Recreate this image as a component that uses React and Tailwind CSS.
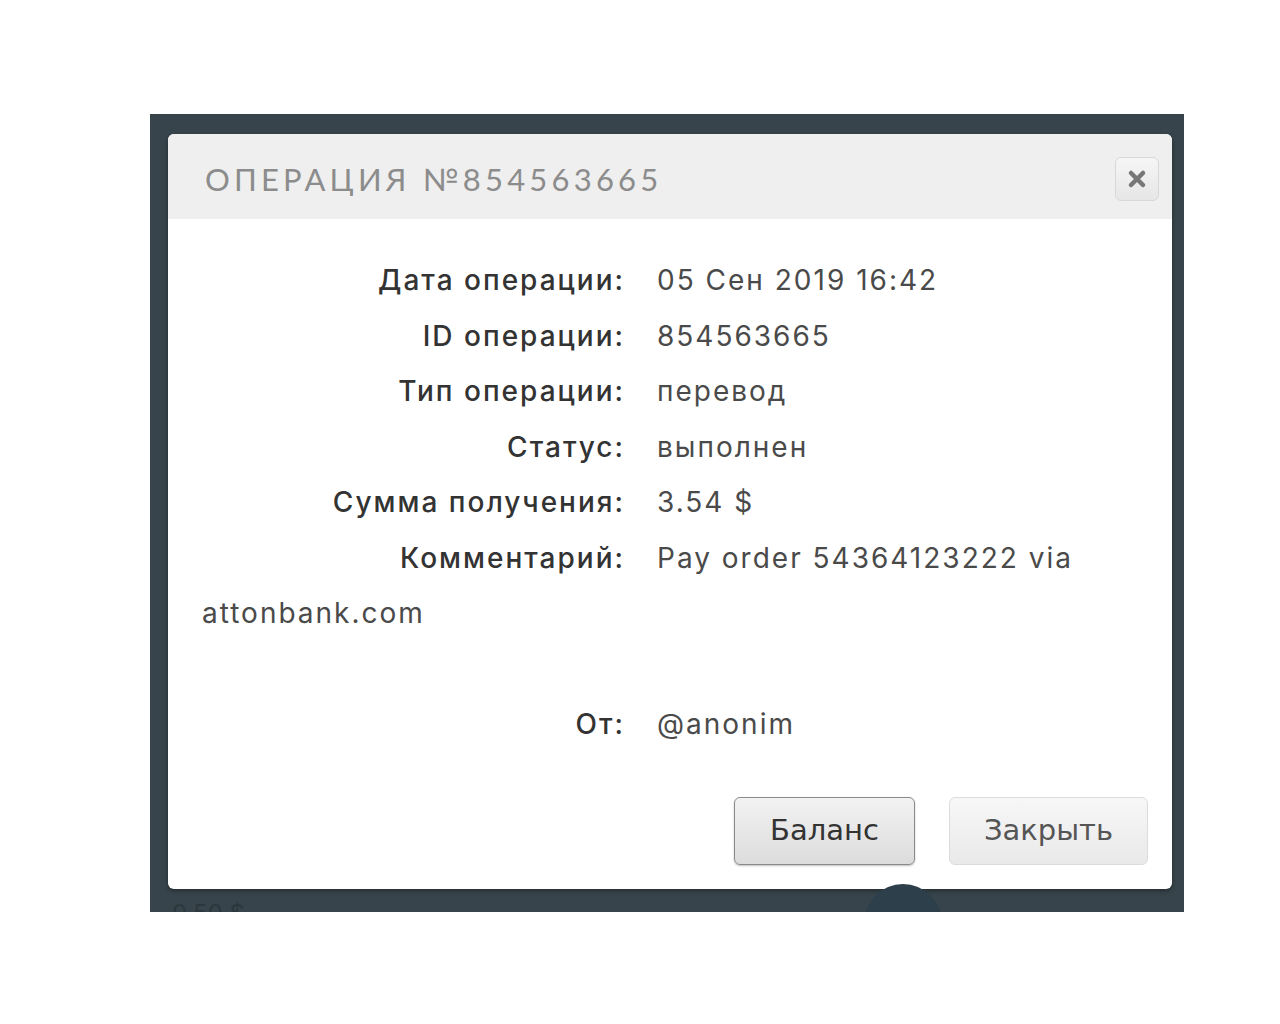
export default function App() {
  const rows = [
    ['Дата операции:', '05 Сен 2019 16:42'],
    ['ID операции:', '854563665'],
    ['Тип операции:', 'перевод'],
    ['Статус:', 'выполнен'],
    ['Сумма получения:', '3.54 $'],
    ['Комментарий:', 'Pay order 54364123222 via'],
  ];

  return (
    <div className="w-[1280px] h-[1024px] bg-white pt-[114px] pl-[150px]">
      <div className="w-[1034px] h-[798px] bg-[#37444b] pt-[20px] pl-[18px] relative overflow-hidden">
        <div className="w-[1004px] h-[755px] bg-white rounded-[6px] shadow-[0_2px_4px_rgba(0,0,0,0.35)] overflow-hidden">
          <div className="h-[85px] bg-[#efefef] flex items-center justify-between pl-[37px] pr-[13px]">
            <h2 className="mt-[5px] text-[31px] tracking-[4.2px] text-[#8c8c8c] font-['Lato',sans-serif] font-normal">
              ОПЕРАЦИЯ №854563665
            </h2>
            <button className="mt-[5px] w-[44px] h-[44px] rounded-[6px] border border-[#d8d8d8] bg-gradient-to-b from-[#f6f6f6] to-[#e6e6e6] flex items-center justify-center">
              <svg width="20" height="20" viewBox="0 0 20 20">
                <path d="M4 4 L16 16 M16 4 L4 16" stroke="#777" strokeWidth="4.5" strokeLinecap="round" />
              </svg>
            </button>
          </div>

          <div className="pl-[34px] pr-[30px] pt-[34px] text-[28px] tracking-[2px] leading-[55.5px] font-['Inter',sans-serif] text-[#4a4a4a]">
            {rows.map(([k, v]) => (
              <div key={k} className="flex">
                <div className="w-[423px] text-right font-medium text-[#333]">{k}</div>
                <div className="ml-[32px]">{v}</div>
              </div>
            ))}
            <div>attonbank.com</div>
            <div className="h-[55.5px]" />
            <div className="flex">
              <div className="w-[423px] text-right font-medium text-[#333]">От:</div>
              <div className="ml-[32px]">@anonim</div>
            </div>

            <div className="flex justify-end gap-[34px] mt-[44px] tracking-normal font-['DejaVu_Sans',sans-serif] text-[29px]">
              <button className="w-[181px] h-[68px] rounded-[6px] border border-[#8a8a8a] bg-gradient-to-b from-[#f2f2f2] to-[#dcdcdc] text-[#333] shadow-[0_1px_2px_rgba(0,0,0,0.25)]">
                Баланс
              </button>
              <button className="w-[199px] h-[68px] rounded-[6px] border border-[#dcdcdc] bg-gradient-to-b from-[#f7f7f7] to-[#e9e9e9] text-[#555] mr-[-6px]">
                Закрыть
              </button>
            </div>
          </div>
        </div>
        <div className="absolute left-[22px] top-[782px] text-[24px] text-[#2c373d] font-['Inter',sans-serif]">0.50 $</div>
        <div className="absolute left-[714px] top-[770px] w-[78px] h-[78px] rounded-full bg-[#2d3f4b]" />
      </div>
    </div>
  );
}
